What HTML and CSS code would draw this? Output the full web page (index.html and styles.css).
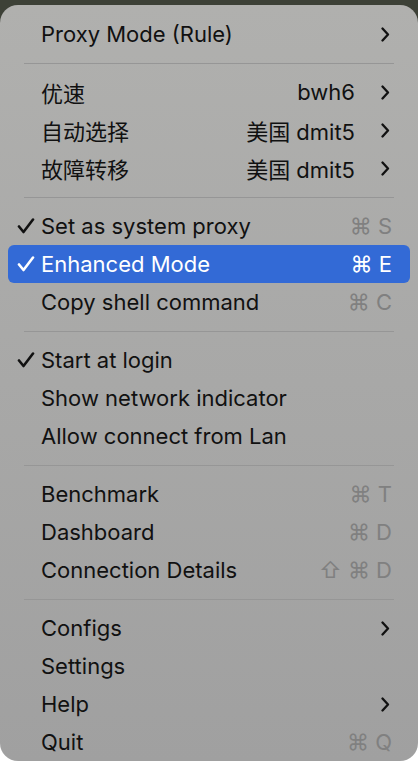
FILE: index.html
```html
<!DOCTYPE html>
<html lang="en">
<head>
    <meta charset="UTF-8">
    <meta name="viewport" content="width=device-width, initial-scale=1.0">
    <title>Menu</title>
    <link rel="stylesheet" href="styles.css">
</head>
<body>

    <div class="menu">
        <div class="item">
            <span class="check"></span>
            <span class="label">Proxy Mode (Rule)</span>
            <span class="arrow"><svg width="9" height="15" viewBox="0 0 9 15"><path d="M1.5 1.5 L7 7.5 L1.5 13.5"/></svg></span>
        </div>

        <div class="sep"></div>

        <div class="item">
            <span class="check"></span>
            <span class="label">优速</span>
            <span class="value">bwh6</span>
            <span class="arrow"><svg width="9" height="15" viewBox="0 0 9 15"><path d="M1.5 1.5 L7 7.5 L1.5 13.5"/></svg></span>
        </div>
        <div class="item">
            <span class="check"></span>
            <span class="label">自动选择</span>
            <span class="value">美国 dmit5</span>
            <span class="arrow"><svg width="9" height="15" viewBox="0 0 9 15"><path d="M1.5 1.5 L7 7.5 L1.5 13.5"/></svg></span>
        </div>
        <div class="item">
            <span class="check"></span>
            <span class="label">故障转移</span>
            <span class="value">美国 dmit5</span>
            <span class="arrow"><svg width="9" height="15" viewBox="0 0 9 15"><path d="M1.5 1.5 L7 7.5 L1.5 13.5"/></svg></span>
        </div>

        <div class="sep"></div>

        <div class="item">
            <span class="check"><svg width="18" height="16" viewBox="0 0 18 16"><path d="M2 8.5 L6.5 14 L16 1.5"/></svg></span>
            <span class="label">Set as system proxy</span>
            <span class="key">⌘ S</span>
        </div>
        <div class="item active">
            <span class="check"><svg width="18" height="16" viewBox="0 0 18 16"><path d="M2 8.5 L6.5 14 L16 1.5"/></svg></span>
            <span class="label">Enhanced Mode</span>
            <span class="key">⌘ E</span>
        </div>
        <div class="item">
            <span class="check"></span>
            <span class="label">Copy shell command</span>
            <span class="key">⌘ C</span>
        </div>

        <div class="sep"></div>

        <div class="item">
            <span class="check"><svg width="18" height="16" viewBox="0 0 18 16"><path d="M2 8.5 L6.5 14 L16 1.5"/></svg></span>
            <span class="label">Start at login</span>
        </div>
        <div class="item">
            <span class="check"></span>
            <span class="label">Show network indicator</span>
        </div>
        <div class="item">
            <span class="check"></span>
            <span class="label">Allow connect from Lan</span>
        </div>

        <div class="sep"></div>

        <div class="item">
            <span class="check"></span>
            <span class="label">Benchmark</span>
            <span class="key">⌘ T</span>
        </div>
        <div class="item">
            <span class="check"></span>
            <span class="label">Dashboard</span>
            <span class="key">⌘ D</span>
        </div>
        <div class="item">
            <span class="check"></span>
            <span class="label">Connection Details</span>
            <span class="key">⇧ ⌘ D</span>
        </div>

        <div class="sep"></div>

        <div class="item">
            <span class="check"></span>
            <span class="label">Configs</span>
            <span class="arrow"><svg width="9" height="15" viewBox="0 0 9 15"><path d="M1.5 1.5 L7 7.5 L1.5 13.5"/></svg></span>
        </div>
        <div class="item">
            <span class="check"></span>
            <span class="label">Settings</span>
        </div>
        <div class="item">
            <span class="check"></span>
            <span class="label">Help</span>
            <span class="arrow"><svg width="9" height="15" viewBox="0 0 9 15"><path d="M1.5 1.5 L7 7.5 L1.5 13.5"/></svg></span>
        </div>
        <div class="item">
            <span class="check"></span>
            <span class="label">Quit</span>
            <span class="key">⌘ Q</span>
        </div>
    </div>

</body>
</html>
```

FILE: styles.css
```css
body {
    margin: 0;
    font-family: Inter, "Noto Sans CJK SC", sans-serif;
    background: linear-gradient(#3d4137 0, #3d4137 30px, #ffffff 30px);
    height: 766px;
    overflow: hidden;
}

.menu {
    margin-top: 5px;
    height: 756px;
    box-sizing: border-box;
    padding: 10px 8px 0 8px;
    border-radius: 18px;
    background: linear-gradient(#b0b0ae, #a0a0a0);
    color: #111;
}

.item {
    display: flex;
    align-items: center;
    height: 38px;
    font-size: 22px;
    padding-right: 20px;
    border-radius: 6px;
}

.item.active {
    background-color: #336ad6;
    color: white;
}

.check {
    width: 33px;
    flex: none;
    display: flex;
    justify-content: flex-end;
    padding-right: 6px;
    box-sizing: border-box;
}

.check svg path {
    fill: none;
    stroke: #111;
    stroke-width: 2.6;
    stroke-linecap: round;
    stroke-linejoin: round;
}

.active .check svg path {
    stroke: white;
}

.label {
    flex: 1;
}

.arrow {
    width: 35px;
    display: flex;
    justify-content: flex-end;
}

.arrow svg path {
    fill: none;
    stroke: #111;
    stroke-width: 2.3;
    stroke-linecap: round;
    stroke-linejoin: round;
}

.key {
    color: #808080;
    margin-right: -2px;
}

.active .key {
    color: white;
}

.sep {
    height: 20px;
    display: flex;
    align-items: center;
    padding: 0 16px;
}

.sep::before {
    content: "";
    flex: 1;
    height: 1px;
    background: #969696;
}
```
